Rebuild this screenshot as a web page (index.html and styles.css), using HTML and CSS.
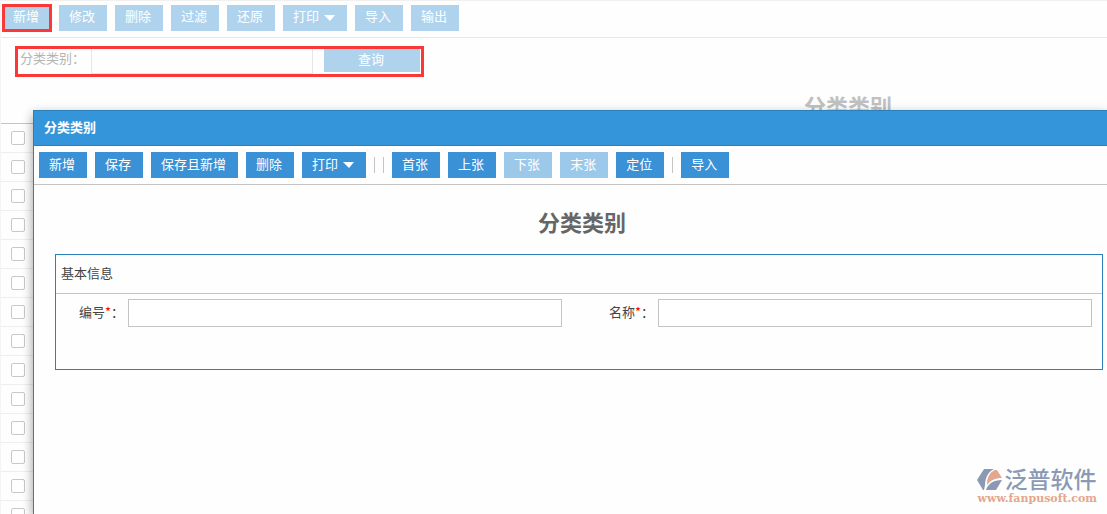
FILE: index.html
```
<!DOCTYPE html>
<html lang="zh-CN">
<head>
    <meta charset="UTF-8">
    <meta name="viewport" content="width=device-width, initial-scale=1.0">
    <title>分类类别</title>
    <link rel="stylesheet" href="styles.css">
</head>
<body>
    <div class="list-page">
        <div class="toolbar list-toolbar">
            <button type="button" class="btn marked">新增</button>
            <button type="button" class="btn">修改</button>
            <button type="button" class="btn">删除</button>
            <button type="button" class="btn">过滤</button>
            <button type="button" class="btn">还原</button>
            <button type="button" class="btn">打印<span class="caret"></span></button>
            <button type="button" class="btn">导入</button>
            <button type="button" class="btn">输出</button>
        </div>
        <form class="query">
            <label for="queryType">分类类别：</label>
            <input type="text" id="queryType">
            <button type="button" class="query-btn">查询</button>
        </form>
        <div class="sheet">
            <h1 class="title">分类类别</h1>
            <ul class="rows">
                <li><input type="checkbox" aria-label="选择"></li>
                <li><input type="checkbox" aria-label="选择"></li>
                <li><input type="checkbox" aria-label="选择"></li>
                <li><input type="checkbox" aria-label="选择"></li>
                <li><input type="checkbox" aria-label="选择"></li>
                <li><input type="checkbox" aria-label="选择"></li>
                <li><input type="checkbox" aria-label="选择"></li>
                <li><input type="checkbox" aria-label="选择"></li>
                <li><input type="checkbox" aria-label="选择"></li>
                <li><input type="checkbox" aria-label="选择"></li>
                <li><input type="checkbox" aria-label="选择"></li>
                <li><input type="checkbox" aria-label="选择"></li>
                <li><input type="checkbox" aria-label="选择"></li>
                <li><input type="checkbox" aria-label="选择"></li>
            </ul>
        </div>
    </div>

    <div class="dialog" role="dialog" aria-labelledby="dialogTitle">
        <div class="dialog-header" id="dialogTitle">分类类别</div>
        <div class="toolbar dialog-toolbar">
            <button type="button" class="btn">新增</button>
            <button type="button" class="btn">保存</button>
            <button type="button" class="btn">保存且新增</button>
            <button type="button" class="btn">删除</button>
            <button type="button" class="btn">打印<span class="caret"></span></button>
            <span class="sep"></span>
            <span class="sep"></span>
            <button type="button" class="btn">首张</button>
            <button type="button" class="btn">上张</button>
            <button type="button" class="btn" disabled>下张</button>
            <button type="button" class="btn" disabled>末张</button>
            <button type="button" class="btn">定位</button>
            <span class="sep"></span>
            <button type="button" class="btn">导入</button>
        </div>
        <div class="dialog-body">
            <h2 class="title">分类类别</h2>
            <section class="panel">
                <h3 class="panel-title">基本信息</h3>
                <div class="fields">
                    <div class="field">
                        <label for="code">编号<span class="required">*</span>：</label>
                        <input type="text" id="code">
                    </div>
                    <div class="field">
                        <label for="name">名称<span class="required">*</span>：</label>
                        <input type="text" id="name">
                    </div>
                </div>
            </section>
        </div>
    </div>

    <div class="brand">
        <div class="brand-top">
            <svg width="27" height="24" viewBox="0 0 27 24" aria-hidden="true">
                <path d="M7 1h10c-6 3-9 9-9 16l-1 5h-1L0 12z" fill="#8b99b4"/>
                <path d="M10 17c0-8 3-13 8-15h2l5 8c-7 0-11 2-15 7z" fill="#e3a78e"/>
                <path d="M9 22c2-6 7-10 16-10l-6 10z" fill="#8b99b4"/>
            </svg>
            <span class="brand-name">泛普软件</span>
        </div>
        <div class="brand-url">www.fanpusoft.com</div>
    </div>
</body>
</html>
```
FILE: styles.css
```
* {
    box-sizing: border-box;
}
body {
    margin: 0;
    height: 100vh;
    overflow: hidden;
    position: relative;
    font-family: "Noto Sans CJK SC", sans-serif;
    font-size: 13px;
    color: #444;
    background: #fefefe;
}
button, input {
    font-family: inherit;
    font-size: inherit;
}
.toolbar {
    display: flex;
    align-items: center;
    gap: 8px;
}
.btn {
    display: flex;
    align-items: center;
    gap: 5px;
    height: 26px;
    padding: 0 12px 4px 10px;
    border: none;
    background: #3a91d6;
    color: #fff;
    cursor: pointer;
    white-space: nowrap;
}
.btn:disabled {
    background: #9cc8ea;
    cursor: default;
}
.caret {
    border-left: 6px solid transparent;
    border-right: 5px solid transparent;
    border-top: 6px solid #fff;
    margin-top: 4px;
}
.sep {
    width: 1px;
    height: 16px;
    background: #c4c4c4;
}
.title {
    margin: 0;
    font-size: 22px;
    line-height: 32px;
    font-weight: bold;
    text-align: center;
    color: #666;
}

/* list behind the dialog */
.list-page {
    height: 100%;
    overflow: hidden;
    border-top: 1px solid #f0f0f0;
    border-left: 1px solid #f4f4f4;
}
.list-toolbar {
    height: 37px;
    padding: 0 2px 3px;
    border-bottom: 1px solid #e8e8e8;
}
.list-toolbar .btn {
    background: #afd3ed;
}
.list-toolbar .marked {
    outline: 3px solid #fb3838;
    outline-offset: -2px;
}
.query {
    display: flex;
    align-items: flex-start;
    width: 409px;
    height: 31px;
    margin: 8px 0 0 14px;
    border: 3px solid #fb3838;
}
.query label {
    width: 73px;
    padding-left: 2px;
    line-height: 18px;
    color: #b4b4b4;
}
.query input {
    width: 222px;
    height: 25px;
    margin-right: 11px;
    border: 1px solid #e6e6e6;
    border-top: none;
    background: none;
}
.query-btn {
    flex: 1;
    height: 23px;
    padding: 0 4px 6px 2px;
    margin-right: 1px;
    border: none;
    background: #afd3ed;
    color: #fff;
}
.sheet {
    min-width: 1694px;
    padding-top: 12px;
}
.sheet .title {
    height: 34px;
    color: #c0c0c0;
}
.rows {
    margin: 0;
    padding: 0;
    list-style: none;
    border-top: 1px solid #a9cce4;
}
.rows li {
    display: flex;
    align-items: center;
    height: 29px;
    padding-left: 10px;
    border-bottom: 1px solid #eee;
}
.rows input {
    appearance: none;
    width: 14px;
    height: 14px;
    margin: 0;
    border: 1px solid #c8c8c8;
    border-radius: 2px;
    background: #fff;
}

/* dialog */
.dialog {
    position: absolute;
    top: 110px;
    left: 33px;
    right: 0;
    bottom: 0;
    border: 1px solid #2a80b9;
    border-right: none;
    border-bottom: none;
    background: #fefefe;
    box-shadow: 0 4px 10px rgba(0, 0, 0, 0.4);
}
.dialog-header {
    height: 35px;
    padding-left: 10px;
    line-height: 31px;
    font-weight: bold;
    color: #fff;
    background: #3595db;
    border-bottom: 1px solid #2a80b9;
}
.dialog-toolbar {
    height: 39px;
    padding-left: 5px;
    border-bottom: 1px solid #c4c4c4;
}
.dialog-body {
    padding: 20px 4px 0 21px;
}
.dialog-body .title {
    padding-left: 6px;
}
.panel {
    margin-top: 17px;
    border: 1px solid #2a80b9;
}
.panel-title {
    margin: 0;
    padding: 0 5px 2px;
    font-size: 13px;
    font-weight: normal;
    line-height: 36px;
    border-bottom: 1px solid #c4c4c4;
}
.fields {
    display: flex;
    gap: 24px;
    padding: 5px 10px 42px 0;
}
.field {
    flex: 1;
    display: flex;
}
.field label {
    width: 72px;
    padding-right: 4px;
    line-height: 26px;
    text-align: right;
}
.field input {
    flex: 1;
    min-width: 0;
    height: 28px;
    border: 1px solid #c4c4c4;
    background: #fff;
}
.required {
    color: #f00;
}

/* corner logo */
.brand {
    position: absolute;
    right: 10px;
    bottom: 9px;
}
.brand-top {
    display: flex;
    align-items: center;
    height: 24px;
}
.brand-name {
    font-size: 23px;
    font-weight: 500;
    line-height: 20px;
    padding-bottom: 4px;
    color: #8b99b4;
}
.brand-url {
    font-family: "DejaVu Serif", serif;
    font-size: 11px;
    font-weight: bold;
    line-height: 13px;
    color: #e3a78e;
}
```
